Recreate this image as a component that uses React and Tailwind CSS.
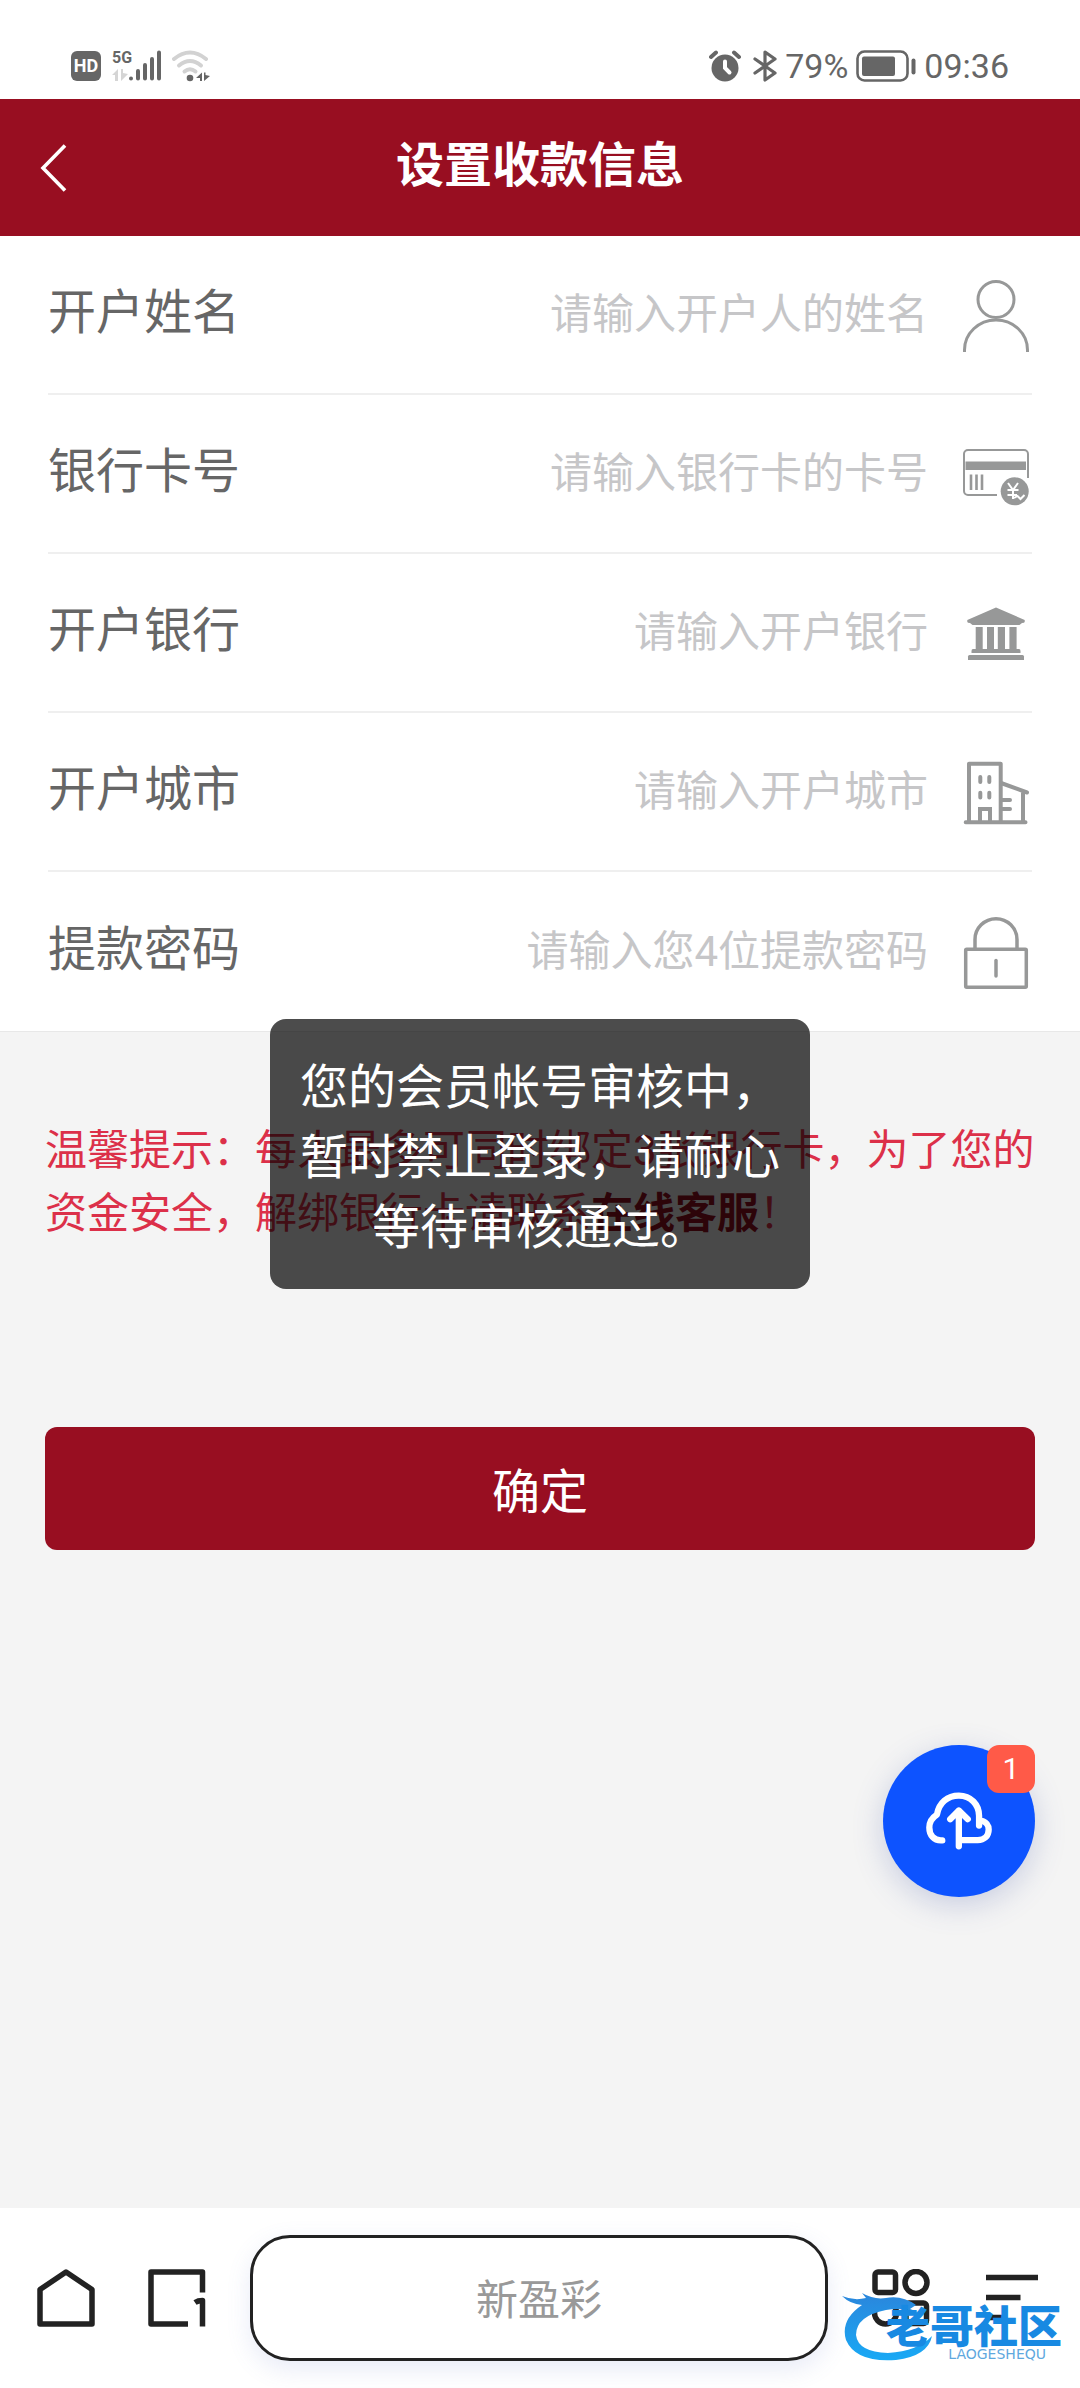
import React from "react";

const UserIcon = () => (
  <svg className="w-[72px] h-[76px] shrink-0" viewBox="0 0 72 76" fill="none" stroke="#979898" strokeWidth="3">
    <circle cx="36" cy="22.5" r="18" />
    <path d="M4.5 75 V73 A31.5 30 0 0 1 67.5 73 V75" />
  </svg>
);

const CardIcon = () => (
  <svg className="w-[72px] h-[76px] shrink-0" viewBox="0 0 72 76" fill="none">
    <path d="M37 59 H8 A4 4 0 0 1 4 55 V18 A4 4 0 0 1 8 14 H64 A4 4 0 0 1 68 18 V42" stroke="#979898" strokeWidth="2" />
    <path d="M5.5 25.5 H66 V34 H5.5 Z" fill="#979898" />
    <path d="M11 38.5 V54 M16.5 38.5 V54 M22 38.5 V54" stroke="#979898" strokeWidth="2.6" />
    <circle cx="54.7" cy="55.3" r="14" fill="#979898" />
    <path
      d="M48 47 L53 54 L58 47 M53 54 V63 M47.5 54 H58.5 M47.5 59 H57 M54 62 L57.5 60 L60.5 63 L64.5 59"
      stroke="#fff"
      strokeWidth="2"
    />
  </svg>
);

const BankIcon = () => (
  <svg className="w-[72px] h-[76px] shrink-0" viewBox="0 0 72 76" fill="#979898">
    <path d="M36 12.5 L64.7 25 V27 Q64.5 28 62 28 L59.5 30 H12.5 L10 28 Q7.5 28 7.3 27 V25 Z" />
    <path d="M15.7 32 H22.7 V54 H27 V32 H34 V54 H37.8 V32 H45 V54 H49.4 V32 H56.6 V54 H59 Q60.5 54 60.5 56 V58 H11.5 V56 Q11.5 54 13 54 H15.7 Z" />
    <path d="M9.5 60 H62.5 Q64 60 64 61.5 V65 H8 V61.5 Q8 60 9.5 60 Z" />
  </svg>
);

const CityIcon = () => (
  <svg
    className="w-[72px] h-[76px] shrink-0"
    viewBox="0 0 72 76"
    fill="none"
    stroke="#979898"
    strokeWidth="4"
    strokeLinecap="round"
    strokeLinejoin="round"
  >
    <path d="M5.7 68.3 H65.5 M9 67 V9.7 H40.7 V67" />
    <path d="M41 29 L67 38.5 M63 39 V67 M41 46 H50 M41 55 H50" />
    <path d="M20.3 23 V28 M29.3 23 V28 M20.3 38.7 V43.5 M29.3 38.7 V43.5" />
    <path d="M20 67 V55 H30 V67" strokeLinejoin="miter" />
  </svg>
);

const LockIcon = () => (
  <svg
    className="w-[72px] h-[76px] shrink-0"
    viewBox="0 0 72 76"
    fill="none"
    stroke="#979898"
    strokeWidth="3.5"
    strokeLinejoin="round"
  >
    <rect x="5.7" y="35.2" width="60.6" height="38" rx="1" />
    <path d="M15 35 V25.5 A21 20.7 0 0 1 57 25.5 V35" />
    <path d="M36 46.5 V62" strokeLinecap="round" />
  </svg>
);

const fields = [
  { id: "name", label: "开户姓名", placeholder: "请输入开户人的姓名", Icon: UserIcon },
  { id: "card", label: "银行卡号", placeholder: "请输入银行卡的卡号", Icon: CardIcon },
  { id: "bank", label: "开户银行", placeholder: "请输入开户银行", Icon: BankIcon },
  { id: "city", label: "开户城市", placeholder: "请输入开户城市", Icon: CityIcon },
  { id: "password", label: "提款密码", placeholder: "请输入您4位提款密码", Icon: LockIcon },
];

const StatusBar = () => (
  <div className="flex items-center justify-between pt-8 px-[71px] h-[99px] bg-white text-[#666]">
    <div className="flex items-center gap-[11px]">
      <span className="flex items-center justify-center size-[30px] rounded-md bg-[#666] text-white text-lg font-bold">
        HD
      </span>
      <div className="flex items-end h-[31px]">
        <div className="flex flex-col w-[17px] h-full justify-between">
          <span className="text-base leading-4 font-bold">5G</span>
          <svg className="w-4 h-3" viewBox="0 0 16 12" fill="#d5d5d5">
            <path d="M0 6 L6 0 V12 H3 V6 Z M9 0 H11 V4 L16 5 L9 12 Z" />
          </svg>
        </div>
        <svg className="w-8 h-[31px]" viewBox="0 0 32 31" stroke="#666" strokeWidth="4" strokeLinecap="round">
          <path d="M2 28.5 V28.4 M9 21 V28.5 M16 15 V28.5 M23 9 V28.5 M30 2.5 V28.5" />
        </svg>
      </div>
      <svg className="w-[38px] h-8" viewBox="0 0 38 32" fill="none" strokeLinecap="round">
        <path d="M2 9 Q18 -4 34 9" stroke="#d2d2d2" strokeWidth="4" />
        <path d="M7 15.5 Q18 6.5 29 15.5" stroke="#d2d2d2" strokeWidth="4" />
        <path d="M12.5 21.5 Q18 17 23.5 21.5" stroke="#d2d2d2" strokeWidth="4" />
        <circle cx="18" cy="28" r="3.3" fill="#666" />
        <path d="M24 28 L30 22.5 V31 H28 V28 Z M32 22.5 H33.5 V25 L38 26 L32 31 Z" fill="#666" />
      </svg>
    </div>
    <div className="flex items-center text-[34px] leading-[34px]">
      <svg className="w-8 h-8 mr-3" viewBox="0 0 32 32" fill="none" strokeLinecap="round">
        <circle cx="16" cy="18" r="13.5" fill="#666" />
        <path d="M2 7 L7 2.5 M30 7 L25 2.5" stroke="#666" strokeWidth="4" />
        <path d="M16 11.5 V18 L20.5 22.5" stroke="#fff" strokeWidth="4" />
      </svg>
      <svg
        className="w-6 h-8 mr-2"
        viewBox="0 0 24 32"
        fill="none"
        stroke="#666"
        strokeWidth="3.2"
        strokeLinecap="round"
        strokeLinejoin="round"
      >
        <path d="M2 9 L22 23 L12 30 V2 L22 9 L2 23" />
      </svg>
      <span>79%</span>
      <svg className="w-[60px] h-8 mx-2" viewBox="0 0 60 32" fill="none">
        <rect x="1.5" y="1.5" width="50" height="29" rx="7" stroke="#666" strokeWidth="2.6" />
        <rect x="6" y="6.5" width="33" height="19.5" rx="2" fill="#666" />
        <rect x="55.5" y="8.5" width="4" height="16" rx="2" fill="#666" />
      </svg>
      <span>09:36</span>
    </div>
  </div>
);

const Watermark = () => (
  <div className="absolute right-[18px] bottom-6 flex items-end pointer-events-none">
    <svg className="w-[92px] h-[72px] -mr-[48px]" viewBox="0 0 92 72" fill="none">
      <defs>
        <linearGradient id="swoosh" x1="0" y1="0" x2="0" y2="1">
          <stop offset="0" stopColor="#2a86dc" />
          <stop offset="1" stopColor="#19a9f5" />
        </linearGradient>
      </defs>
      <path
        d="M0 4 Q12 9 24 6 L20 1 Q32 8 44 6 Q60 3 74 13 L68 17 L76 20 Q58 15 44 18 Q14 24 14 43 Q16 60 46 61 Q76 59 90 44 Q86 64 54 68 Q14 71 4 48 Q-2 28 20 13 Q8 12 0 4 Z"
        fill="url(#swoosh)"
      />
    </svg>
    <div className="flex flex-col items-end pb-1 text-[#1889e2]">
      <span className="text-[44px] leading-[40px] font-black">老哥社区</span>
      <span className="pr-4 text-sm leading-3 text-[#5fa8de] font-['DejaVu_Sans',sans-serif]">LAOGESHEQU</span>
    </div>
  </div>
);

const BottomBar = () => (
  <nav className="relative flex items-center h-[180px] pl-[37px] pr-[42px] bg-white">
    <button aria-label="主页">
      <svg className="w-[58px] h-[58px]" viewBox="0 0 58 58" fill="none" stroke="#222" strokeWidth="5.5" strokeLinejoin="round">
        <path d="M3 20.5 L29 3 L55 20.5 V55 H3 Z" />
      </svg>
    </button>
    <button aria-label="标签页" className="ml-[53px]">
      <svg className="w-[58px] h-[58px]" viewBox="0 0 58 58" fill="none" stroke="#222" strokeWidth="5.5" strokeLinejoin="round">
        <path d="M40 55 H3 V3 H54.5 V23.5" />
        <path d="M47 33.5 Q50 31.5 54.5 31.5 V57.5" />
      </svg>
    </button>
    <button className="flex-1 h-[126px] mx-11 pt-1 rounded-[40px] border-3 border-[#222] bg-white text-[42px] text-[#999] shadow-[0_8px_24px_rgba(90,110,200,0.14)]">
      新盈彩
    </button>
    <button aria-label="应用">
      <svg className="w-[58px] h-[58px]" viewBox="0 0 58 58" fill="none" stroke="#222" strokeWidth="5.5">
        <rect x="3" y="3" width="20.5" height="20.5" rx="3" />
        <circle cx="44" cy="13.5" r="11" />
        <circle cx="13.5" cy="44" r="11" />
        <rect x="34" y="34" width="20.5" height="20.5" rx="3" />
      </svg>
    </button>
    <button aria-label="菜单" className="ml-14">
      <svg className="w-[52px] h-[58px]" viewBox="0 0 52 58" stroke="#222" strokeWidth="5.5">
        <path d="M0 8.5 H52 M0 28.5 H34.5 M0 48.5 H20" />
      </svg>
    </button>
    <Watermark />
  </nav>
);

const App = () => {
  return (
    <div className="flex flex-col min-h-screen bg-[#f4f4f4] font-['Roboto','Noto_Sans_CJK_SC',sans-serif]">
      <StatusBar />

      <div className="relative flex flex-col flex-1">
        {/* Header */}
        <header className="flex items-center h-[137px] px-10 bg-[#980e21] text-white">
          <button aria-label="返回" className="w-[60px]">
            <svg className="w-[27px] h-[48px]" viewBox="0 0 27 48" fill="none" stroke="#fff" strokeWidth="3.6">
              <path d="M25 1.5 L3 24 L25 46.5" />
            </svg>
          </button>
          <h1 className="flex-1 text-center text-5xl leading-[72px] pb-1 font-bold">设置收款信息</h1>
          <div className="w-[60px]" />
        </header>

        {/* Form */}
        <form className="flex flex-col flex-1">
          <div className="px-12 bg-white border-b border-[#e8e8e8]">
            {fields.map(({ id, label, placeholder, Icon }) => (
              <div key={id} className="flex items-center h-[159px] border-b-2 border-[#efefef] last:border-b-0">
                <label htmlFor={id} className="pb-[3px] text-5xl leading-[72px] text-[#666]">
                  {label}
                </label>
                <input
                  id={id}
                  type="text"
                  placeholder={placeholder}
                  className="flex-1 min-w-0 mr-8 text-right text-[42px] leading-[63px] text-[#666] placeholder:text-[#c6c6c8] outline-none"
                />
                <Icon />
              </div>
            ))}
          </div>

          <div className="px-[45px] pt-[87px]">
            <p className="text-[42px] leading-[63px] text-[#dc3049]">
              温馨提示：每人最多可同时绑定3张银行卡，为了您的资金安全，解绑银行卡请联系
              <a href="#service" className="font-bold text-[#980e21]">在线客服</a>！
            </p>
            <button
              type="submit"
              className="w-full h-[123px] mt-[182px] pt-2 rounded-xl bg-[#980e21] text-white text-5xl leading-[72px]"
            >
              确定
            </button>
          </div>
        </form>

        {/* Upload button */}
        <button
          aria-label="上传"
          className="absolute right-[45px] bottom-[311px] flex items-center justify-center size-[152px] rounded-full bg-[#0d53ff] shadow-[0_8px_30px_rgba(70,90,170,0.25)]"
        >
          <svg
            className="w-[66px] h-[58px]"
            viewBox="261 281 199 173"
            fill="none"
            stroke="#fff"
            strokeWidth="19"
            strokeLinecap="round"
            strokeLinejoin="round"
          >
            <path d="M310 426 C284 428 271 409 271 387 C271 369 280 357 294 348 C300 312 326 291 360 291 C396 291 421 318 421 352 V381" />
            <path d="M428 367 C442 369 450 381 450 393 C450 413 436 425 417 425 H362" />
            <path d="M360 444 V336 M334 362 L360 336 L387 362" />
          </svg>
          <span className="absolute top-0 right-0 flex items-center justify-center size-12 rounded-xl bg-[#ff5a48] text-white text-3xl">
            1
          </span>
        </button>

        {/* Toast */}
        <div className="absolute inset-0 flex items-center justify-center pointer-events-none">
          <div
            role="alert"
            className="w-1/2 px-[30px] pt-[34px] pb-[26px] rounded-2xl bg-black/70 text-white text-center text-5xl leading-[70px]"
          >
            您的会员帐号审核中，暂时禁止登录，请耐心等待审核通过。
          </div>
        </div>
      </div>

      <BottomBar />
    </div>
  );
};

export default App;
